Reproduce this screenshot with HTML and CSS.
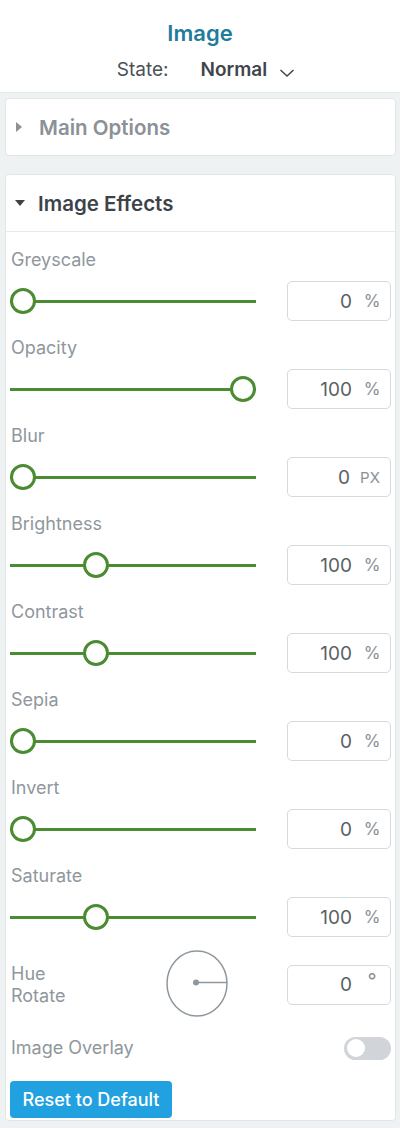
FILE: index.html
```html
<!DOCTYPE html>
<html lang="en">
<head>
    <meta charset="UTF-8">
    <meta name="viewport" content="width=device-width, initial-scale=1.0">
    <title>Image - Settings</title>
    <link rel="stylesheet" href="styles.css">
</head>
<body>

<header class="head">
    <h1 class="head-title">Image</h1>
    <div class="state">
        <span class="state-label">State:</span>
        <span class="state-value">Normal</span>
        <svg class="chevron" width="16" height="10" viewBox="0 0 16 10"><path d="M1.5 2 L8 8 L14.5 2" fill="none" stroke="#3f454b" stroke-width="1.5"/></svg>
    </div>
</header>

<main class="page">
    <section class="panel">
        <div class="panel-head closed">
            <span class="caret-right"></span>
            <span>Main Options</span>
        </div>
    </section>

    <section class="panel">
        <div class="panel-head open">
            <span class="caret-down"></span>
            <span>Image Effects</span>
        </div>

        <div class="panel-body" id="effects">
            <!-- sliders are added by the script below -->
        </div>

        <div class="hue-row">
            <div class="hue-label">Hue<br>Rotate</div>
            <svg class="dial" width="62" height="67" viewBox="0 0 62 67">
                <ellipse cx="31" cy="33.5" rx="30" ry="32.5" fill="none" stroke="#8e979e" stroke-width="1.5"/>
                <line x1="30" y1="32.5" x2="61" y2="32.5" stroke="#8e979e" stroke-width="1.5"/>
                <circle cx="30" cy="32.5" r="3" fill="#8e979e"/>
            </svg>
            <div class="num-box">
                <span class="num">0</span>
                <span class="unit deg">&deg;</span>
            </div>
        </div>

        <div class="overlay-row">
            <span class="label">Image Overlay</span>
            <span class="toggle"><span class="toggle-knob"></span></span>
        </div>

        <button class="reset">Reset to Default</button>
    </section>
</main>

<script>
    const effects = [
        { name: 'Greyscale', value: 0, max: 100, unit: '%' },
        { name: 'Opacity', value: 100, max: 100, unit: '%' },
        { name: 'Blur', value: 0, max: 10, unit: 'PX' },
        { name: 'Brightness', value: 100, max: 300, unit: '%' },
        { name: 'Contrast', value: 100, max: 300, unit: '%' },
        { name: 'Sepia', value: 0, max: 100, unit: '%' },
        { name: 'Invert', value: 0, max: 100, unit: '%' },
        { name: 'Saturate', value: 100, max: 300, unit: '%' }
    ];

    const body = document.getElementById('effects');
    const travel = 220; // track width minus thumb width

    effects.forEach(effect => {
        const left = Math.round(effect.value / effect.max * travel);
        const unitClass = effect.unit === 'PX' ? 'unit px' : 'unit';
        body.innerHTML += `
            <div class="effect">
                <div class="label">${effect.name}</div>
                <div class="controls">
                    <div class="slider">
                        <div class="track"></div>
                        <div class="thumb" style="left: ${left}px"></div>
                    </div>
                    <div class="num-box">
                        <span class="num">${effect.value}</span>
                        <span class="${unitClass}">${effect.unit}</span>
                    </div>
                </div>
            </div>`;
    });
</script>

</body>
</html>
```

FILE: styles.css
```css
body {
    font-family: Inter, "Open Sans", Arial, sans-serif;
    background-color: #eef2f3;
    color: #3f454b;
    margin: 0;
    padding: 0;
}

.head {
    background-color: #fff;
    height: 92px;
    border-bottom: 1px solid #e3e8ea;
    text-align: center;
}

.head-title {
    margin: 0;
    padding-top: 18px;
    font-size: 22px;
    line-height: 30px;
    font-weight: 600;
    color: #1f7c9c;
}

.state {
    display: flex;
    justify-content: center;
    align-items: center;
    margin-top: 9px;
    height: 24px;
    padding-left: 12px;
}

.state-label {
    font-size: 19px;
    color: #4a5157;
}

.state-value {
    font-size: 19px;
    font-weight: 600;
    margin-left: 32px;
    color: #3f454b;
}

.chevron {
    margin-left: 12px;
    margin-top: 7px;
}

.page {
    padding: 5px 4px 6px 5px;
}

.panel {
    background-color: #fff;
    border: 1px solid #e1e6e8;
    border-radius: 4px;
    margin-bottom: 18px;
}

.panel:last-child {
    margin-bottom: 0;
}

.panel-head {
    display: flex;
    align-items: center;
    height: 56px;
    padding-left: 10px;
    font-size: 20.5px;
    font-weight: 600;
}

.panel-head.closed {
    color: #8b9197;
}

.panel-head.open {
    color: #3d4349;
    border-bottom: 1px solid #e7ebed;
}

.caret-right {
    width: 0;
    height: 0;
    border-top: 5.5px solid transparent;
    border-bottom: 5.5px solid transparent;
    border-left: 6px solid #8b9197;
    margin: 0 17px 0 0;
}

.caret-down {
    width: 0;
    height: 0;
    border-left: 5.5px solid transparent;
    border-right: 5.5px solid transparent;
    border-top: 6px solid #3d4349;
    margin: 0 13px 0 -1px;
}

.panel-body {
    padding: 16px 4px 0 4px;
}

.effect {
    margin-bottom: 15px;
}

.label {
    font-size: 18px;
    line-height: 24px;
    color: #8f979d;
    padding-left: 1px;
}

.effect .label {
    margin-bottom: 9px;
}

.controls {
    display: flex;
    align-items: center;
    justify-content: space-between;
    height: 40px;
}

.slider {
    position: relative;
    width: 246px;
    height: 26px;
}

.track {
    position: absolute;
    left: 0;
    right: 0;
    top: 11.5px;
    height: 3px;
    background-color: #4b8b32;
}

.thumb {
    position: absolute;
    top: 0;
    width: 20px;
    height: 20px;
    border: 3px solid #4b8b32;
    border-radius: 50%;
    background-color: #fff;
}

.num-box {
    display: flex;
    align-items: center;
    justify-content: flex-end;
    box-sizing: border-box;
    width: 104px;
    height: 40px;
    border: 1px solid #d5dadd;
    border-radius: 5px;
    padding-right: 9px;
}

.num {
    font-size: 19px;
    color: #5b6166;
}

.unit {
    width: 18px;
    margin-left: 11px;
    font-size: 17px;
    color: #8a9096;
    text-align: center;
}

.unit.px {
    width: 22px;
    margin-left: 9px;
    font-size: 15px;
}

.unit.deg {
    align-self: flex-start;
    margin-top: 3px;
    font-size: 20px;
}

.hue-row {
    display: flex;
    align-items: center;
    height: 67px;
    margin-top: -1px;
    padding: 0 4px;
}

.hue-label {
    width: 155px;
    font-size: 18px;
    line-height: 22px;
    color: #8f979d;
    padding-left: 1px;
}

.dial {
    margin-top: -2px;
}

.hue-row .num-box {
    margin-left: auto;
}

.overlay-row {
    display: flex;
    align-items: center;
    justify-content: space-between;
    height: 24px;
    margin-top: 18px;
    padding: 0 4px;
}

.toggle {
    position: relative;
    width: 47px;
    height: 23px;
    border-radius: 12px;
    background-color: #d1d5d9;
}

.toggle-knob {
    position: absolute;
    left: 3px;
    top: 2.5px;
    width: 18px;
    height: 18px;
    border-radius: 50%;
    background-color: #fff;
}

.reset {
    margin: 21px 0 2px 4px;
    width: 162px;
    height: 37px;
    border: none;
    border-radius: 4px;
    background-color: #22a1e0;
    color: #fff;
    font-family: inherit;
    font-size: 18px;
    font-weight: 500;
    display: block;
}
```
